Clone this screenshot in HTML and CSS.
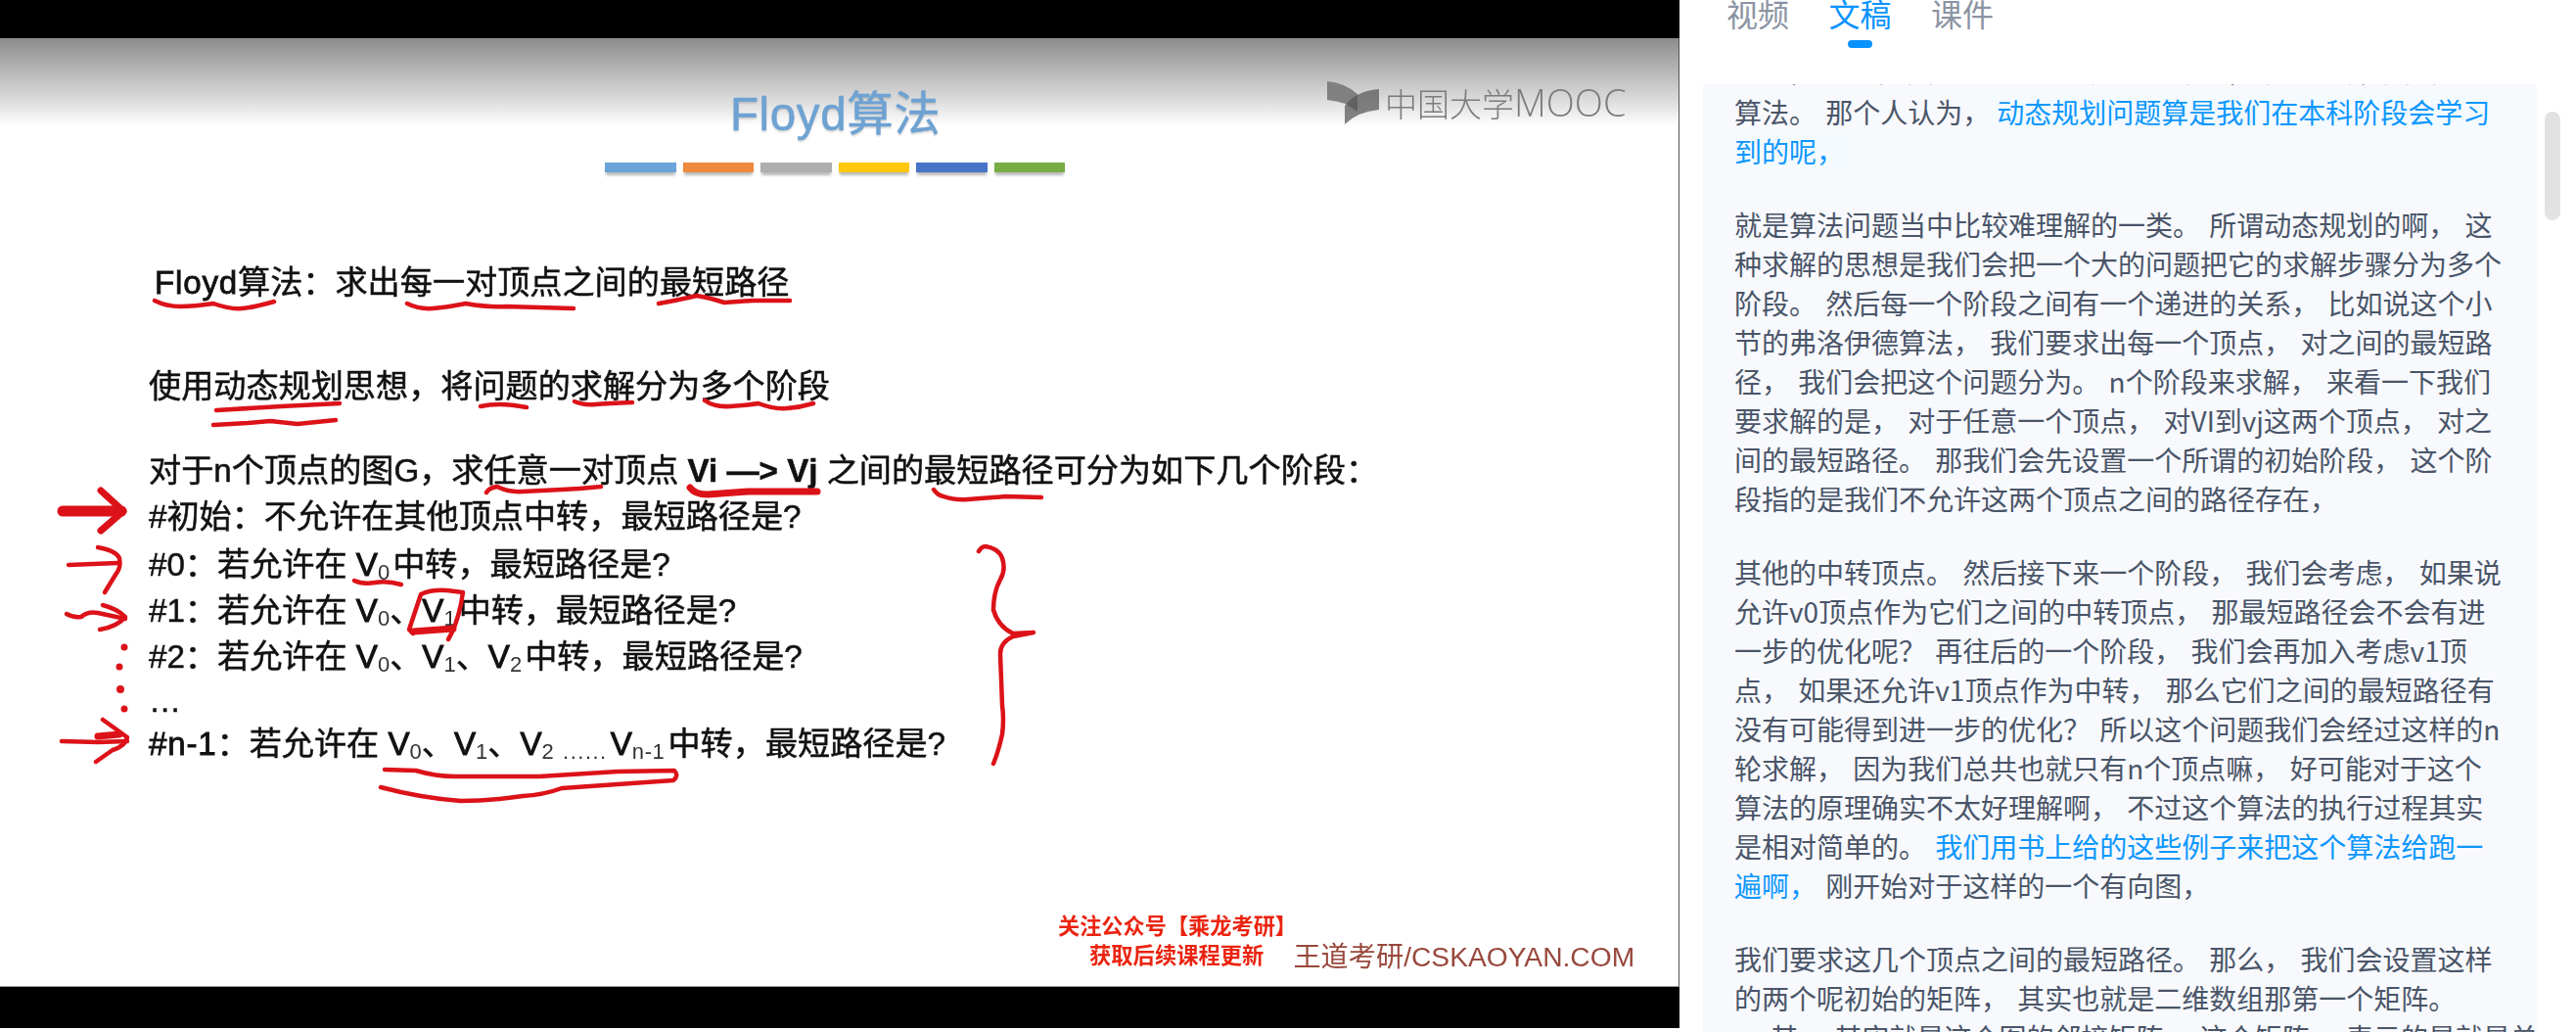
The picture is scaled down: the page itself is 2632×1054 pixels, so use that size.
FILE: index.html
```html
<!DOCTYPE html>
<html lang="zh-CN">
<head>
<meta charset="utf-8">
<title>Floyd算法</title>
<link rel="stylesheet" href="styles.css">
</head>
<body>
<div class="app">
  <section class="video">
    <div class="bar bar-top"></div>
    <div class="slide">
      <h1 class="slide-title">Floyd算法</h1>
      <div class="swatches">
        <i class="sw sw1"></i><i class="sw sw2"></i><i class="sw sw3"></i><i class="sw sw4"></i><i class="sw sw5"></i><i class="sw sw6"></i>
      </div>
      <div class="slide-body">
        <p class="ln ln-first"><span class="latin">Floyd</span>算法：求出每一对顶点之间的最短路径</p>
        <p class="ln ln-second">使用动态规划思想，将问题的求解分为多个阶段</p>
        <p class="ln ln-third">对于n个顶点的图G，求任意一对顶点 <b class="vv">Vi —&gt; Vj</b> 之间的最短路径可分为如下几个阶段：</p>
        <p class="ln">#初始：不允许在其他顶点中转，最短路径是?</p>
        <p class="ln ln-step">#0：若允许在 <span class="v">V</span><span class="s e">0</span>中转，最短路径是?</p>
        <p class="ln">#1：若允许在 <span class="v">V</span><span class="s">0</span>、<span class="v">V</span><span class="s e">1</span>中转，最短路径是?</p>
        <p class="ln">#2：若允许在 <span class="v">V</span><span class="s">0</span>、<span class="v">V</span><span class="s">1</span>、<span class="v">V</span><span class="s e">2</span>中转，最短路径是?</p>
        <p class="ln ln-tight">…</p>
        <p class="ln ln-tight"><span class="latin">#n-1</span>：若允许在 <span class="v">V</span><span class="s">0</span>、<span class="v">V</span><span class="s">1</span>、<span class="v">V</span><span class="s">2</span> <span class="s dots">......</span><span class="v">V</span><span class="s e sub-n">n-1</span>中转，最短路径是?</p>
      </div>

      <div class="logo">
        <svg class="logo-mark" width="54" height="46" viewBox="0 0 54 46" aria-hidden="true">
          <path class="leaf-a" d="M1 1 Q20 3 32 14 L32 32 L20 24 Q10 21 1 20 Z"/>
          <path class="leaf-b" d="M54 9 L54 30 Q32 32 19 45 L19 26 Q30 11 54 9 Z"/>
        </svg>
        <span class="logo-text">中国大学<span class="mooc">MOOC</span></span>
      </div>

      <div class="notice">
        <span class="notice-a">关注公众号【乘龙考研】</span>
        <div class="notice-row">
          <span class="notice-b">获取后续课程更新</span>
          <span class="notice-c">王道考研/CSKAOYAN.COM</span>
        </div>
      </div>

      <svg class="ink" viewBox="0 39 1716 969" aria-hidden="true">
        <g class="ink-thin">
          <path d="M158 307 Q170 313 184 313 T218 310 Q235 316 247 315 T280 308"/>
          <path d="M416 310 Q428 316 442 315 T476 310 Q498 314 517 313 L586 315"/>
          <path d="M673 310 Q695 306 712 302 Q725 304 740 309 L769 307 L807 307"/>
          <path d="M221 419 L287 415 L347 412"/>
          <path d="M218 434 L253 432 L276 430 L304 433 L343 429"/>
          <path d="M491 415 Q500 413 511 413 T538 416"/>
          <path d="M587 410 Q596 414 608 413 T646 411"/>
          <path d="M720 409 Q730 416 746 415 T775 412 Q790 418 804 417 T831 412"/>
          <path d="M497 503 Q500 498 508 497 Q520 503 534 502 L574 500 L592 499 L614 497"/>
          <path class="thick" d="M705 498 Q710 505 723 505 L764 502 L835 502"/>
          <path d="M954 500 Q958 506 964 507 Q975 511 989 510 L1028 507 L1064 508"/>
          <path d="M1000 563 Q1003 558 1007 558 Q1020 560 1024 570 Q1028 582 1022 592 Q1015 605 1015 623 Q1020 640 1035 647 L1056 646 L1035 650 Q1022 656 1022 668 L1024 720 Q1026 735 1024 750 Q1020 768 1015 780"/>
          <path d="M362 593 Q370 597 383 595 T410 597"/>
          <path d="M458 653 Q466 640 471 617 L473 605 L457 603 Q440 602 430 607 L418 643 L422 647"/>
          <path class="thick" d="M422 645 L463 642"/>
          <path d="M393 786 L425 787 Q445 793 465 793 L551 793 L631 788 L689 787 Q694 792 688 797 L574 805 Q555 812 534 813 Q500 818 471 818 Q430 815 389 804"/>
          <path d="M70 577 L120 575"/>
          <path d="M100 559 Q118 562 122 570 Q124 580 118 587 L107 605"/>
          <path d="M68 627 Q75 631 83 630 Q90 624 100 626 L128 632"/>
          <path d="M105 618 Q120 622 128 630 Q120 640 102 643"/>
          <path d="M63 757 L100 758 L130 757"/>
          <path d="M105 735 L130 753 Q128 762 115 766 L98 778"/>
          <path class="thick" d="M100 752 L122 750"/>
        </g>
        <g class="ink-bold">
          <path d="M64 522 L124 522"/>
          <path class="semi" d="M103 501 L126 522 L103 542"/>
        </g>
        <circle class="dot" cx="127" cy="661" r="3.5"/>
        <circle class="dot" cx="122" cy="681" r="3.5"/>
        <circle class="dot" cx="123" cy="704" r="4"/>
        <circle class="dot" cx="127" cy="724" r="3.5"/>
      </svg>
    </div>
    <div class="bar bar-bottom"></div>
  </section>

  <aside class="side">
    <nav class="tabs">
      <span class="tab">视频</span>
      <span class="tab tab-on">文稿</span>
      <span class="tab">课件</span>
    </nav>
    <div class="panel">
      <div class="script">
        <div class="cut-line">好的，这个小节我们要学习的是最短路径， 问题的弗洛伊德</div>
        <p>算法。 那个人认为，<span class="mark mark-soft">动态规划问题算是我们在本科阶段会学习<br>到的呢，</span></p>
        <p>就是算法问题当中比较难理解的一类。 所谓动态规划的啊， 这<br>
        种求解的思想是我们会把一个大的问题把它的求解步骤分为多个<br>
        阶段。 然后每一个阶段之间有一个递进的关系， 比如说这个小<br>
        节的弗洛伊德算法， 我们要求出每一个顶点， 对之间的最短路<br>
        径， 我们会把这个问题分为。 n个阶段来求解， 来看一下我们<br>
        要求解的是， 对于任意一个顶点， 对VI到vj这两个顶点， 对之<br>
        间的最短路径。 那我们会先设置一个所谓的初始阶段， 这个阶<br>
        段指的是我们不允许这两个顶点之间的路径存在，</p>
        <p>其他的中转顶点。 然后接下来一个阶段， 我们会考虑， 如果说<br>
        允许v0顶点作为它们之间的中转顶点， 那最短路径会不会有进<br>
        一步的优化呢？ 再往后的一个阶段， 我们会再加入考虑v1顶<br>
        点， 如果还允许v1顶点作为中转， 那么它们之间的最短路径有<br>
        没有可能得到进一步的优化？ 所以这个问题我们会经过这样的n<br>
        轮求解， 因为我们总共也就只有n个顶点嘛， 好可能对于这个<br>
        算法的原理确实不太好理解啊， 不过这个算法的执行过程其实<br>
        是相对简单的。 <span class="mark">我们用书上给的这些例子来把这个算法给跑一<br>遍啊，</span> 刚开始对于这样的一个有向图，</p>
        <p>我们要求这几个顶点之间的最短路径。 那么， 我们会设置这样<br>
        的两个呢初始的矩阵， 其实也就是二维数组那第一个矩阵。<br>
        。 其， 其实就是这个图的邻接矩阵， 这个矩阵， 表示的是就是单</p>
      </div>
    </div>
    <div class="scroll-thumb"></div>
  </aside>
</div>
</body>
</html>
```

FILE: styles.css
```css
* { box-sizing: border-box; }
html, body { margin: 0; height: 100%; background: #fff; overflow: hidden; }
body { font-family: "Liberation Sans", "Noto Sans CJK SC", sans-serif; }

.app { display: flex; width: 2632px; height: 1054px; overflow: hidden; }

/* video */
.video { flex: 0 0 1716px; display: flex; flex-direction: column; }
.bar { background: #000; }
.bar-top { height: 39px; }
.bar-bottom { height: 42px; }
.slide {
  position: relative;
  height: 969px;
  border-right: 1px solid #555;
  border-bottom: 1px solid #999;
  background: linear-gradient(#8c8c8c 0, #b2b2b2 30px, #dadada 62px, #fff 90px, #fff 100%);
  padding-top: 48px;
}
.slide > * { filter: blur(0.45px); }
.slide-title {
  margin: 0 0 0 746px;
  height: 60px;
  font-size: 47.5px;
  line-height: 60px;
  font-weight: 400;
  letter-spacing: 0.6px;
  color: #6ea2d2;
  -webkit-text-stroke: 0.5px #6ea2d2;
  text-shadow: 0 2px 2px rgba(90, 90, 90, .25);
}
.swatches { display: flex; gap: 7px; margin: 19px 0 0 618px; width: 470px; }
.sw { flex: 1; height: 10px; box-shadow: 0 4px 3px -1px rgba(0, 0, 0, .28); }
.sw1 { background: #6aa3d8; }
.sw2 { background: #ed8a3d; }
.sw3 { background: #aeaeae; }
.sw4 { background: #ffc60a; }
.sw5 { background: #4774c8; }
.sw6 { background: #78ad45; }

.slide-body { margin: 89px 0 0 152px; color: #111; }
.ln {
  margin: 0;
  font-size: 33.15px;
  line-height: 47px;
  white-space: nowrap;
  -webkit-text-stroke: 0.5px #111;
}
.ln-first { margin-left: 6px; }
.ln-second { margin-top: 59px; }
.ln-third { margin-top: 39px; }
.ln-step { margin-top: 2px; }
.ln-tight { line-height: 44px; }
.latin { letter-spacing: 0.8px; -webkit-text-stroke: 0.8px #111; }
.vv { font-weight: 700; }
.v { -webkit-text-stroke: 1px #111; }
.s {
  font-size: 22px;
  line-height: 0;
  -webkit-text-stroke: 0;
  color: #333;
  position: relative;
  top: 4px;
}
.e { margin-right: 3px; }
.dots { letter-spacing: 1.5px; margin-right: 3px; }
.sub-n { letter-spacing: 0.6px; }

.logo {
  position: absolute;
  left: 1355px;
  top: 43px;
  display: flex;
  align-items: center;
  gap: 6px;
  color: #7c7c7c;
}
.logo-mark { flex: none; }
.leaf-a { fill: #808080; }
.leaf-b { fill: #555; opacity: .72; }
.logo-text {
  font-family: "Open Sans", "Noto Sans CJK SC", sans-serif;
  font-size: 33px;
  font-weight: 300;
  line-height: 42px;
}
.mooc { font-size: 38px; }

.notice { position: absolute; left: 1081px; top: 892px; }
.notice-a, .notice-b {
  color: #ea2410;
  font-weight: 700;
}
.notice-a { display: block; font-size: 22.2px; line-height: 32px; }
.notice-row { display: flex; align-items: center; gap: 30px; margin: -2px 0 0 32px; white-space: nowrap; }
.notice-b { font-size: 22.3px; line-height: 32px; }
.notice-c { font-size: 28.2px; line-height: 32px; color: #98483c; }

.slide > .ink { position: absolute; left: 0; top: 0; width: 1716px; height: 969px; filter: none; }
.ink-thin path, .ink-bold path {
  fill: none;
  stroke: #dc1219;
  stroke-linecap: round;
  stroke-linejoin: round;
  stroke-width: 4.5px;
}
.ink-thin .thick { stroke-width: 7px; }
.ink-bold path { stroke-width: 11px; }
.ink-bold .semi { stroke-width: 7px; }
.dot { fill: #dc1219; }

/* transcript */
.side { position: relative; flex: 1; min-width: 0; display: flex; flex-direction: column; }
.tabs {
  display: flex;
  flex: none;
  gap: 40.5px;
  height: 76px;
  padding-left: 48px;
  margin-top: -10px;
}
.tab {
  position: relative;
  font-family: "Noto Sans CJK SC", sans-serif;
  font-size: 32px;
  line-height: 46px;
  height: 46px;
  color: #8b94a3;
}
.tab-on { color: #0a93ff; }
.tab-on::after {
  content: "";
  position: absolute;
  left: 19px;
  top: 51px;
  width: 25px;
  height: 8px;
  border-radius: 4px;
  background: #0a93ff;
}
.panel {
  flex: 1;
  min-height: 0;
  margin: 20px 40px 0 24px;
  background: #f7f9fd;
  overflow: hidden;
  padding-left: 32px;
}
.script {
  margin-top: -32px;
  font-family: "Noto Sans CJK SC", sans-serif;
  font-size: 28px;
  line-height: 40px;
  word-spacing: 3px;
  color: #4a5568;
  white-space: nowrap;
}
.cut-line { height: 40px; line-height: 37px; }
.script p { margin: 0 0 35px; }
.mark { color: #0d97ff; }
.mark-soft {
  background: #f4fafe;
  padding: 0 8px 0 7px;
  -webkit-box-decoration-break: slice;
  box-decoration-break: slice;
}
.scroll-thumb {
  position: absolute;
  right: 16px;
  top: 114px;
  width: 16px;
  height: 111px;
  border-radius: 8px;
  background: #e2e2e2;
}
```
